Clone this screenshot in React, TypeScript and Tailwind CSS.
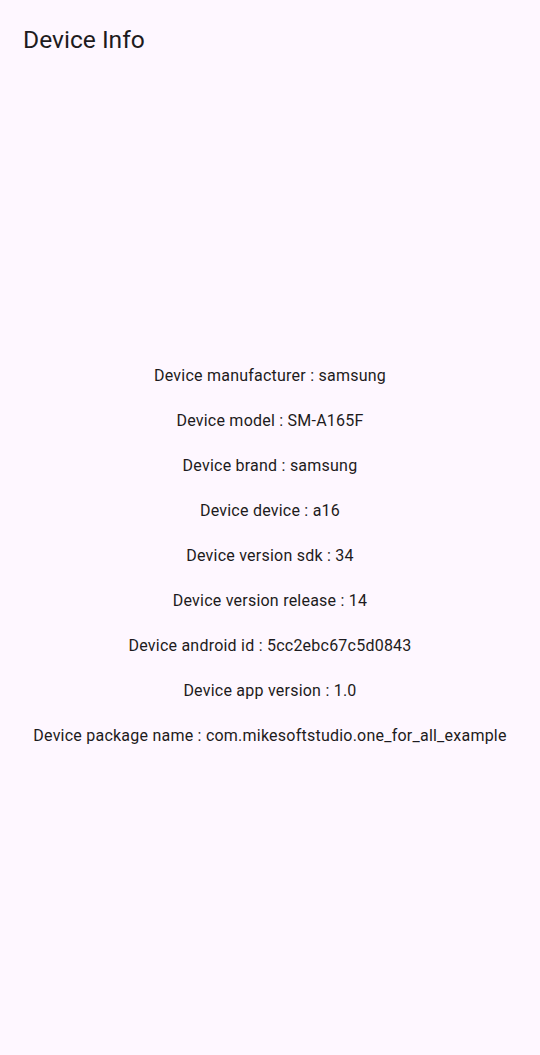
import React from 'react';

const rows = [
  'Device manufacturer : samsung',
  'Device model : SM-A165F',
  'Device brand : samsung',
  'Device device : a16',
  'Device version sdk : 34',
  'Device version release : 14',
  'Device android id : 5cc2ebc67c5d0843',
  'Device app version : 1.0',
  'Device package name : com.mikesoftstudio.one_for_all_example',
];

export default function App() {
  return (
    <div className="min-h-[1055px] w-full bg-[#fef7ff] text-[#1d1b20] font-['Roboto',sans-serif]">
      <header className="h-[80px] px-[23px] flex items-center">
        <h1 className="text-[24.6px] leading-none">Device Info</h1>
      </header>
      <main className="pt-[273px] flex flex-col items-center">
        {rows.map((r) => (
          <div key={r} className="h-[45px] flex items-center text-[16px] tracking-[0.23px]">
            {r}
          </div>
        ))}
      </main>
    </div>
  );
}
